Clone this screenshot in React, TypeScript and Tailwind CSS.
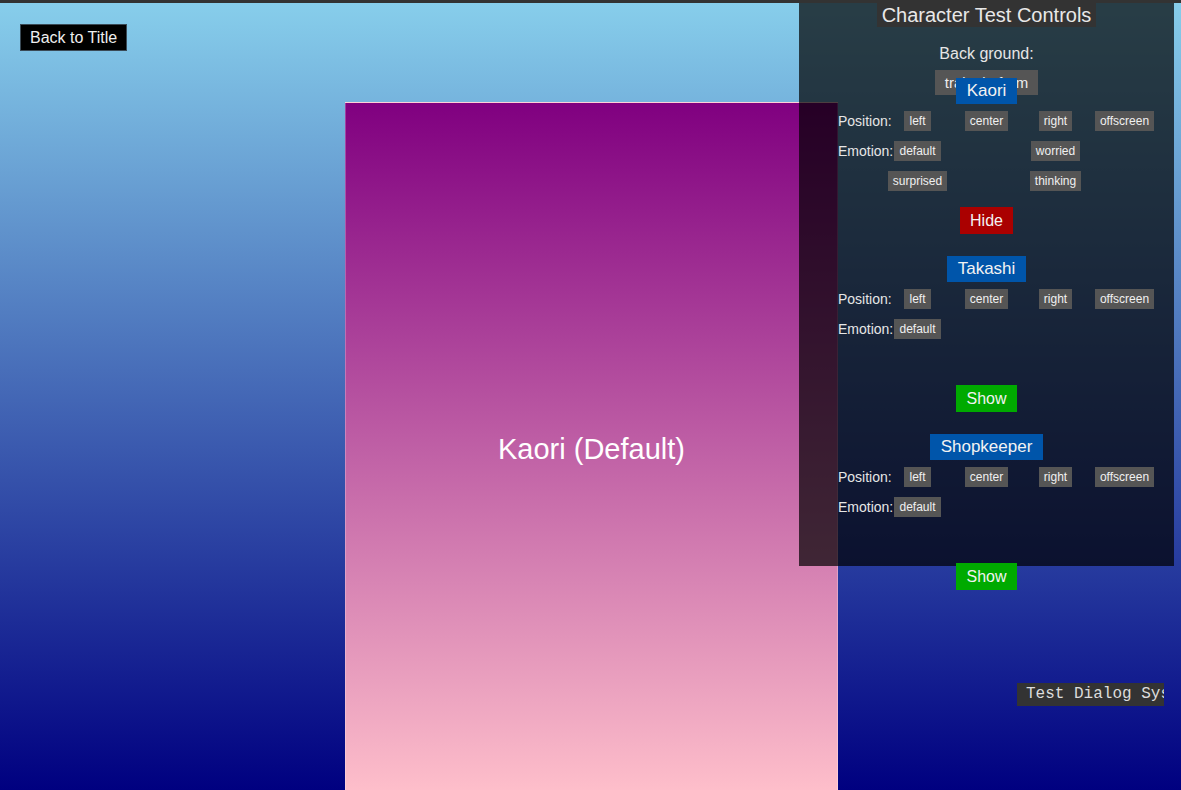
const SANS = { fontFamily: '"Liberation Sans", Arial, sans-serif' };

const POSITIONS = ['left', 'center', 'right', 'offscreen'];

type Emotion = { label: string; col: 'col-start-1' | 'col-start-2' | 'col-start-3' | 'col-start-4' };

interface CharacterBlockProps {
  name: string;
  emotions: Emotion[];
  visible: boolean;
}

function SmallButton({ children, className = '' }: { children: React.ReactNode; className?: string }) {
  return (
    <button
      type="button"
      className={`h-[20px] bg-[#555] px-[5px] text-[12px] leading-[20px] text-[#f0f0f0] whitespace-nowrap ${className}`}
    >
      {children}
    </button>
  );
}

function CharacterBlock({ name, emotions, visible }: CharacterBlockProps) {
  return (
    <div className="flex w-full flex-col items-center">
      <div className="h-[26px] bg-[#0055aa] px-[11px] text-[17px] leading-[26px] text-[#f2f2f2]">{name}</div>

      <div className="mt-[7px] flex w-full pl-[39px]">
        <span className="w-[45px] whitespace-nowrap text-[14px] leading-[20px] text-[#e6e6e6]">Position:</span>
        <div className="grid w-[276px] grid-cols-4 justify-items-center">
          {POSITIONS.map((p) => (
            <SmallButton key={p}>{p}</SmallButton>
          ))}
        </div>
      </div>

      <div className="mt-[10px] flex h-[60px] w-full items-start pl-[39px]">
        <span className="w-[45px] whitespace-nowrap text-[14px] leading-[20px] text-[#e6e6e6]">Emotion:</span>
        <div className="grid w-[276px] grid-cols-4 justify-items-center gap-y-[10px]">
          {emotions.map((e) => (
            <SmallButton key={e.label} className={e.col}>
              {e.label}
            </SmallButton>
          ))}
        </div>
      </div>

      <button
        type="button"
        className={`mt-[6px] h-[27px] px-[10px] text-[16px] leading-[27px] text-[#f2f2f2] ${
          visible ? 'bg-[#aa0000]' : 'bg-[#00aa00]'
        }`}
      >
        {visible ? 'Hide' : 'Show'}
      </button>
    </div>
  );
}

export default function App() {
  return (
    <div
      style={SANS}
      className="relative h-[790px] w-full overflow-hidden border-t-[3px] border-[#333] bg-[linear-gradient(to_bottom,#87ceeb,#000080)]"
    >
      <button
        type="button"
        className="absolute left-[20px] top-[21px] h-[27px] border border-[#3a4a56] bg-black px-[9px] text-[16px] leading-[25px] text-[#eee]"
      >
        Back to Title
      </button>

      {/* character sprite */}
      <div className="absolute left-[345px] top-[99px] flex h-[696px] w-[493px] items-center justify-center border border-white/25 bg-[linear-gradient(to_bottom,#800080,#ffc0cb)]">
        <span className="text-[29px] text-white">Kaori (Default)</span>
      </div>

      {/* test controls */}
      <div className="absolute left-[799px] top-0 flex h-[563px] w-[375px] flex-col items-center bg-black/70">
        <div className="h-[26px] bg-[#333] px-[5px] text-[20px] leading-[24px] text-[#e8e8e8]">
          Character Test Controls
        </div>
        <div className="mt-[18px] text-[16px] leading-[18px] text-[#e6e6e6]">Back ground:</div>
        <button
          type="button"
          className="mt-[7px] h-[25px] bg-[#555] px-[10px] text-[15px] leading-[25px] text-[#eee]"
        >
          trainplatform
        </button>

        <div className="-mt-[17px] flex w-full flex-col gap-[22px]">
          <CharacterBlock
            name="Kaori"
            visible
            emotions={[
              { label: 'default', col: 'col-start-1' },
              { label: 'worried', col: 'col-start-3' },
              { label: 'surprised', col: 'col-start-1' },
              { label: 'thinking', col: 'col-start-3' },
            ]}
          />
          <CharacterBlock name="Takashi" visible={false} emotions={[{ label: 'default', col: 'col-start-1' }]} />
          <CharacterBlock name="Shopkeeper" visible={false} emotions={[{ label: 'default', col: 'col-start-1' }]} />
        </div>
      </div>

      <button
        type="button"
        style={{ fontFamily: '"Liberation Mono", "Courier New", monospace' }}
        className="absolute left-[1017px] top-[680px] h-[23px] w-[147px] overflow-hidden whitespace-nowrap bg-[#333] pl-[9px] text-left text-[16px] leading-[23px] text-[#ddd]"
      >
        Test Dialog System
      </button>
    </div>
  );
}
